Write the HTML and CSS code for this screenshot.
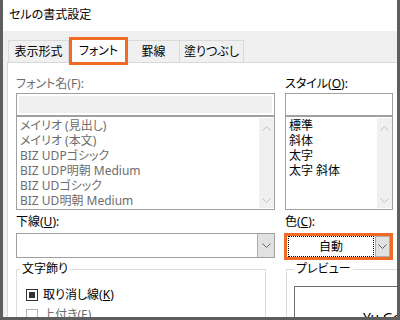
FILE: index.html
```html
<!DOCTYPE html>
<html lang="ja">
<head>
    <meta charset="UTF-8">
    <title>セルの書式設定</title>
    <link rel="stylesheet" href="styles.css">
</head>
<body>
    <div class="window">
        <div class="titlebar">セルの書式設定</div>

        <div class="tabs">
            <div class="tab tab-first">表示形式</div>
            <div class="tab tab-active">フォント</div>
            <div class="tab tab-3">罫線</div>
            <div class="tab tab-4">塗りつぶし</div>
        </div>

        <div class="panel">
            <div class="top-grid">
                <!-- フォント名 -->
                <div class="col">
                    <div class="label disabled">フォント名(F):</div>
                    <div class="textbox"><div class="textbox-fill"></div></div>
                    <div class="listbox">
                        <ul class="items disabled">
                            <li>メイリオ (見出し)</li>
                            <li>メイリオ (本文)</li>
                            <li>BIZ UDPゴシック</li>
                            <li>BIZ UDP明朝 Medium</li>
                            <li>BIZ UDゴシック</li>
                            <li>BIZ UD明朝 Medium</li>
                        </ul>
                        <div class="scrollbar">
                            <svg width="9" height="5" viewBox="0 0 9 5"><polyline points="0.5,4.5 4.5,0.5 8.5,4.5" fill="none" stroke="#c2c2c2" stroke-width="1"/></svg>
                            <svg width="9" height="5" viewBox="0 0 9 5"><polyline points="0.5,0.5 4.5,4.5 8.5,0.5" fill="none" stroke="#c2c2c2" stroke-width="1"/></svg>
                        </div>
                    </div>
                    <div class="label label-gap">下線(<u>U</u>):</div>
                    <div class="combo">
                        <div class="combo-value"></div>
                        <div class="combo-btn">
                            <svg width="9" height="5" viewBox="0 0 9 5"><polyline points="0.5,0.5 4.5,4.5 8.5,0.5" fill="none" stroke="#606060" stroke-width="1"/></svg>
                        </div>
                    </div>
                </div>

                <!-- スタイル -->
                <div class="col">
                    <div class="label">スタイル(<u>O</u>):</div>
                    <div class="textbox"></div>
                    <div class="listbox">
                        <ul class="items">
                            <li>標準</li>
                            <li>斜体</li>
                            <li>太字</li>
                            <li>太字 斜体</li>
                        </ul>
                        <div class="scrollbar">
                            <svg width="9" height="5" viewBox="0 0 9 5"><polyline points="0.5,4.5 4.5,0.5 8.5,4.5" fill="none" stroke="#c2c2c2" stroke-width="1"/></svg>
                            <svg width="9" height="5" viewBox="0 0 9 5"><polyline points="0.5,0.5 4.5,4.5 8.5,0.5" fill="none" stroke="#c2c2c2" stroke-width="1"/></svg>
                        </div>
                    </div>
                    <div class="label label-gap">色(<u>C</u>):</div>
                    <div class="highlight">
                        <div class="combo combo-focus">
                            <div class="combo-value"><span class="focus-rect">自動</span></div>
                            <div class="combo-btn">
                                <svg width="9" height="5" viewBox="0 0 9 5"><polyline points="0.5,0.5 4.5,4.5 8.5,0.5" fill="none" stroke="#606060" stroke-width="1"/></svg>
                            </div>
                        </div>
                    </div>
                </div>
            </div>

            <div class="bottom-row">
                <fieldset class="group group-effects">
                    <legend>文字飾り</legend>
                    <div class="check-row">
                        <span class="checkbox checked"></span>
                        <span>取り消し線(<u>K</u>)</span>
                    </div>
                    <div class="check-row disabled">
                        <span class="checkbox"></span>
                        <span>上付き(E)</span>
                    </div>
                </fieldset>
                <fieldset class="group group-preview">
                    <legend>プレビュー</legend>
                    <div class="preview-box">
                        <span class="preview-text">Yu Gothic</span>
                    </div>
                </fieldset>
            </div>
        </div>
    </div>
</body>
</html>
```

FILE: styles.css
```css
body {
    margin: 0;
    width: 400px;
    height: 320px;
    overflow: hidden;
    font-family: 'Noto Sans', 'Noto Sans CJK JP', sans-serif;
    font-size: 12px;
    font-feature-settings: "palt";
    color: #000;
}
.window {
    box-sizing: border-box;
    width: 400px;
    height: 320px;
    border: 3px solid #5e5e5e;
    border-top: none;
    background: #f0f0f0;
    overflow: hidden;
    display: flex;
    flex-direction: column;
}
.titlebar {
    height: 31px;
    line-height: 30px;
    padding-left: 6px;
    background: #fff;
    flex-shrink: 0;
}
.tabs {
    height: 31px;
    padding-left: 5px;
    display: flex;
    align-items: flex-end;
    flex-shrink: 0;
}
.tab {
    box-sizing: border-box;
    height: 22px;
    line-height: 21px;
    text-align: center;
    border-top: 1px solid #d9d9d9;
    border-right: 1px solid #d9d9d9;
    background: #f0f0f0;
}
.tab-first {
    width: 61px;
    border-left: 1px solid #d9d9d9;
}
.tab-active {
    position: relative;
    z-index: 1;
    width: 59px;
    height: 28px;
    line-height: 22px;
    margin-bottom: -3px;
    border: 3px solid #f26b25;
    background: #fff;
}
.tab-3 {
    width: 52px;
}
.tab-4 {
    width: 64px;
}
.panel {
    flex: 1;
    margin-left: 4px;
    padding: 13px 0 0 8px;
    background: #fff;
    border-top: 1px solid #d9d9d9;
    border-left: 1px solid #d9d9d9;
}
.top-grid {
    display: grid;
    grid-template-columns: 259px 108px;
    column-gap: 10px;
}
.col {
    display: flex;
    flex-direction: column;
}
.label {
    height: 16px;
    line-height: 16px;
}
.label-gap {
    margin-top: 4px;
}
.disabled {
    color: #6d6d6d;
}
.textbox {
    box-sizing: border-box;
    height: 23px;
    margin-top: 1px;
    padding: 2px;
    border: 1px solid #a0a0a0;
    background: #fff;
}
.textbox-fill {
    height: 100%;
    background: #f0f0f0;
}
.listbox {
    box-sizing: border-box;
    height: 94px;
    border: 1px solid #a0a0a0;
    display: flex;
    overflow: hidden;
}
.items {
    flex: 1;
    list-style: none;
    margin: 0;
    padding: 1px 0 0 3px;
    line-height: 15px;
    white-space: nowrap;
}
.scrollbar {
    width: 15px;
    margin: 1px 0 1px 0;
    background: #f0f0f0;
    display: flex;
    flex-direction: column;
    justify-content: space-between;
    align-items: center;
    padding: 8px 0 5px;
    box-sizing: border-box;
}
.combo {
    box-sizing: border-box;
    height: 25px;
    margin-top: 3px;
    border: 1px solid #a0a0a0;
    background: #fff;
    display: flex;
}
.combo-value {
    flex: 1;
}
.combo-btn {
    width: 16px;
    background: #e1e1e1;
    border-left: 1px solid #adadad;
    display: flex;
    align-items: center;
    justify-content: center;
}
.highlight {
    box-sizing: border-box;
    width: 109px;
    height: 27px;
    margin: 3px 0 0 -1px;
    border: 3px solid #f26b25;
}
.combo-focus {
    height: 100%;
    margin: 0;
    border: none;
}
.combo-focus .combo-value {
    display: flex;
    padding: 0 1px 0 1px;
}
.focus-rect {
    flex: 1;
    border: 1px dotted #000;
    text-align: center;
    line-height: 19px;
}
.combo-focus .combo-btn {
    width: 15px;
    border: 1px solid #adadad;
    box-sizing: border-box;
}
.bottom-row {
    display: flex;
    gap: 20px;
    margin-top: 1px;
}
.group {
    margin: 0;
    padding: 10px 0 0 3px;
    border: 1px solid #dcdcdc;
    height: 80px;
    box-sizing: border-box;
}
.group legend {
    padding: 0 2px;
    line-height: 16px;
}
.group-effects {
    width: 250px;
    flex-shrink: 0;
}
.group-preview {
    width: 150px;
    flex-shrink: 0;
    padding: 9px 0 0 7px;
}
.check-row {
    display: flex;
    align-items: center;
    gap: 5px;
    height: 16px;
    line-height: 16px;
    margin-left: 6px;
    margin-bottom: 4px;
}
.checkbox {
    box-sizing: border-box;
    width: 12px;
    height: 12px;
    border: 1px solid #b4b4b4;
    background: #fff;
    padding: 2px;
}
.checkbox.checked {
    border-color: #333;
}
.checkbox.checked::after {
    content: "";
    display: block;
    width: 6px;
    height: 6px;
    background: #333;
}
.preview-box {
    height: 60px;
    border: 1px solid #6d6d6d;
    padding: 22px 0 0 68px;
    box-sizing: border-box;
}
.preview-text {
    font-size: 14px;
    line-height: 18px;
    white-space: nowrap;
}
```
